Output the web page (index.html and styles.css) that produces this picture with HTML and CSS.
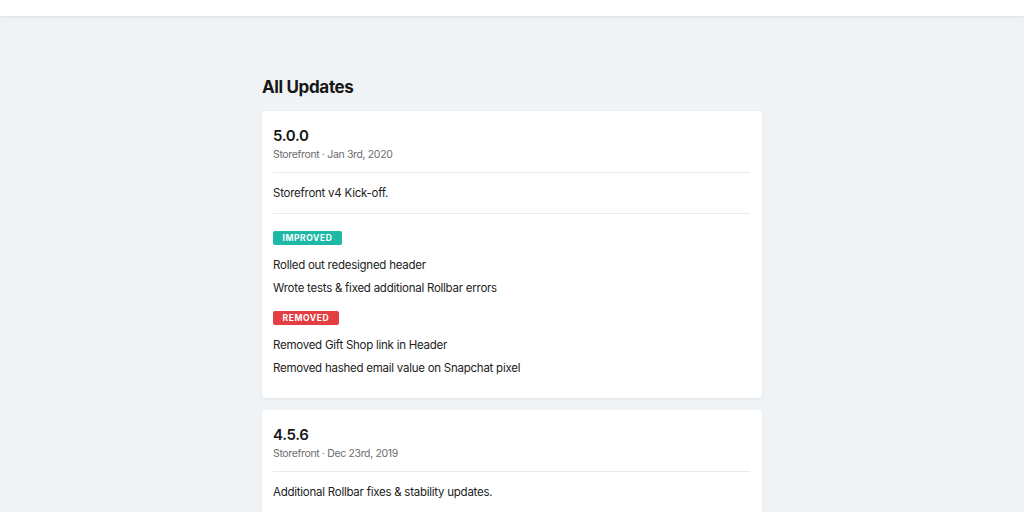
FILE: index.html
```html
<!DOCTYPE html>
<html>
<head>
<meta charset="utf-8">
<link rel="stylesheet" href="styles.css">
</head>
<body>
<header class="topbar"></header>
<main class="main">
  <h1 class="page-title">All Updates</h1>
  <section class="card">
    <h2 class="version">5.0.0</h2>
    <div class="meta">Storefront · Jan 3rd, 2020</div>
    <div class="desc">Storefront v4 Kick-off.</div>
    <div class="changes">
      <span class="badge badge-improved">IMPROVED</span>
      <ul class="items">
        <li>Rolled out redesigned header</li>
        <li>Wrote tests &amp; fixed additional Rollbar errors</li>
      </ul>
      <span class="badge badge-removed">REMOVED</span>
      <ul class="items">
        <li>Removed Gift Shop link in Header</li>
        <li>Removed hashed email value on Snapchat pixel</li>
      </ul>
    </div>
  </section>
  <section class="card">
    <h2 class="version">4.5.6</h2>
    <div class="meta">Storefront · Dec 23rd, 2019</div>
    <div class="desc">Additional Rollbar fixes &amp; stability updates.</div>
  </section>
</main>
</body>
</html>
```
FILE: styles.css
```css
* { box-sizing: border-box; }
html, body { margin: 0; padding: 0; }
body {
  background: #f0f3f6;
  font-family: Inter, "Noto Sans", sans-serif;
  color: #2b2b2b;
  overflow: hidden;
  height: 512px;
}
.topbar {
  height: 16px;
  background: #fff;
  box-shadow: 0 1px 3px rgba(0,0,0,0.08);
}
.main {
  width: 500px;
  margin: 0 auto;
  padding-top: 60px;
}
.page-title {
  margin: 0 0 13px;
  font-size: 17px;
  line-height: 22px;
  font-weight: 700;
  letter-spacing: -0.35px;
  color: #161616;
}
.card {
  background: #fff;
  border-radius: 3px;
  box-shadow: 0 1px 3px rgba(0,0,0,0.06);
  padding: 15px 12px 19px 11px;
  margin-bottom: 12px;
}
.version {
  margin: 0;
  font-size: 15px;
  line-height: 20px;
  font-weight: 600;
  letter-spacing: -0.3px;
  color: #161616;
}
.meta {
  margin-top: 1px;
  font-size: 10.5px;
  line-height: 16px;
  letter-spacing: -0.35px;
  color: #6c6c6c;
  padding-bottom: 9px;
  border-bottom: 1px solid #ebebeb;
}
.desc {
  font-size: 11.5px;
  line-height: 20px;
  letter-spacing: -0.25px;
  padding: 10px 0;
  border-bottom: 1px solid #ebebeb;
  color: #222;
}
.changes {
  padding-top: 17px;
}
.badge {
  display: block;
  width: fit-content;
  height: 14px;
  line-height: 14px;
  padding: 0 9.5px;
  border-radius: 2px;
  font-size: 8.5px;
  font-weight: 700;
  letter-spacing: 0.6px;
  color: #fff;
}
.badge-improved { background: #1db9a6; }
.badge-removed { background: #e33f42; }
.items {
  list-style: none;
  margin: 9px 0 12px;
  padding: 0;
}
.items:last-child { margin-bottom: 0; }
.items li {
  font-size: 11.5px;
  line-height: 22px;
  letter-spacing: -0.25px;
  color: #222;
}
.items li + li { margin-top: 1px; }
```
